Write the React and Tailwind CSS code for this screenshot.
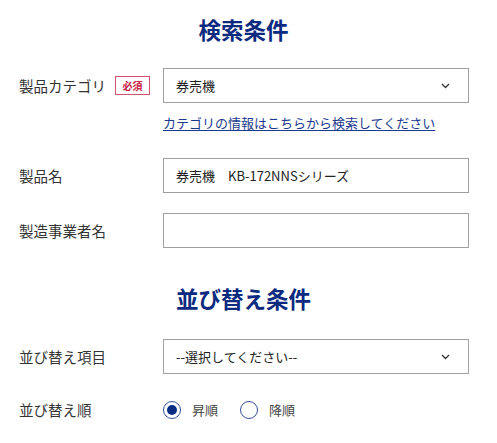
import React from 'react';

const Chevron = () => (
  <svg width="9" height="6" viewBox="0 0 9 6" className="absolute right-[18px] top-1/2 -translate-y-1/2">
    <polyline points="1,1 4.5,4.5 8,1" fill="none" stroke="#333" strokeWidth="1.3" />
  </svg>
);

const Field = ({ children }) => (
  <div className="relative flex h-[35px] w-[306px] items-center border border-[#a0a0a0] bg-white px-[12px] text-[13px] text-[#222]">
    {children}
  </div>
);

const Radio = ({ checked, label }) => (
  <label className="flex items-center gap-[11px]">
    <span className="flex h-[18px] w-[18px] items-center justify-center rounded-full border border-[#3a4f9a] bg-white">
      {checked && <span className="h-[10px] w-[10px] rounded-full bg-[#0a2c84]" />}
    </span>
    <span className="text-[13px] text-[#444]">{label}</span>
  </label>
);

export default function App() {
  return (
    <div
      className="w-[497px] h-[443px] bg-white pl-[19px]"
      style={{ fontFamily: '"Noto Sans CJK JP", "Noto Sans", sans-serif' }}
    >
      <h2 className="pt-[14px] pr-[29px] text-center text-[22.5px] font-bold leading-[30px] text-[#0b2a80]">
        検索条件
      </h2>

      <div className="mt-[24px] flex items-center">
        <div className="flex w-[144px] items-center gap-[9px]">
          <span className="text-[14.5px] text-[#333]">製品カテゴリ</span>
          <span className="flex h-[19px] w-[35px] items-center justify-center border border-[#d4506e] text-[10px] font-bold text-[#c8203f]">
            必須
          </span>
        </div>
        <Field>
          券売機
          <Chevron />
        </Field>
      </div>
      <div className="mt-[10px] pl-[144px] text-[13px] leading-[20px]">
        <a href="#" className="text-[#1b3a8e] underline underline-offset-2">
          カテゴリの情報はこちらから検索してください
        </a>
      </div>

      <div className="mt-[25px] flex items-center">
        <div className="w-[144px] text-[14.5px] text-[#333]">製品名</div>
        <Field>券売機　KB-172NNSシリーズ</Field>
      </div>

      <div className="mt-[20px] flex items-center">
        <div className="w-[144px] text-[14.5px] text-[#333]">製造事業者名</div>
        <Field />
      </div>

      <h2 className="mt-[35px] pr-[29px] text-center text-[22.5px] font-bold leading-[30px] text-[#0b2a80]">
        並び替え条件
      </h2>

      <div className="mt-[26px] flex items-center">
        <div className="w-[144px] text-[14.5px] text-[#333]">並び替え項目</div>
        <Field>
          --選択してください--
          <Chevron />
        </Field>
      </div>

      <div className="mt-[26px] flex h-[20px] items-center">
        <div className="w-[144px] text-[14.5px] text-[#333]">並び替え順</div>
        <div className="flex items-center gap-[22px]">
          <Radio checked label="昇順" />
          <Radio label="降順" />
        </div>
      </div>
    </div>
  );
}
